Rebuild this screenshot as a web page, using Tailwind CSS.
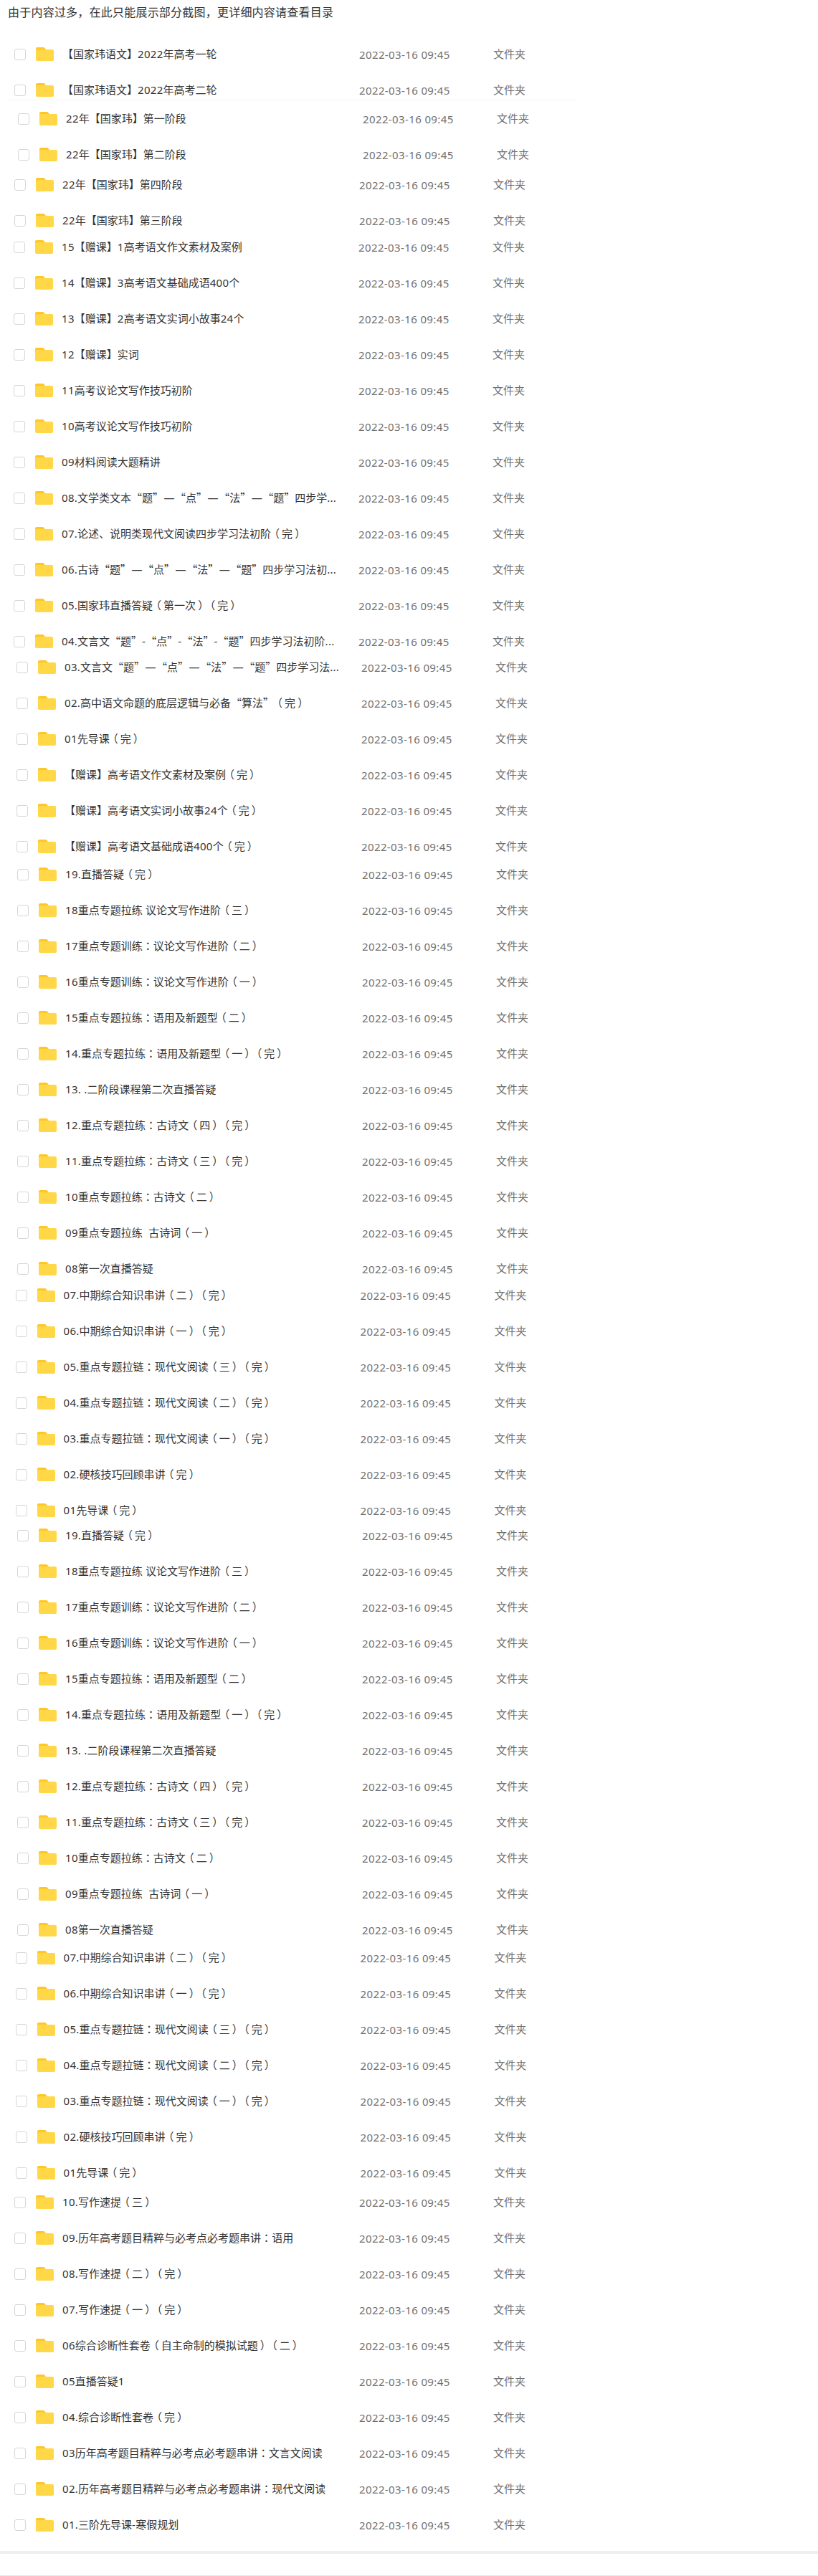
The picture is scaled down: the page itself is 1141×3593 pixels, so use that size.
<!DOCTYPE html>
<html lang="zh-CN">
<head>
<meta charset="utf-8">
<title>目录</title>
<script src="https://cdn.jsdelivr.net/npm/@tailwindcss/browser@4"></script>
</head>
<body class="bg-white">
<main class="flex h-[3593px] w-[1141px] flex-col overflow-hidden font-['Noto_Sans_CJK_SC',sans-serif] [text-spacing-trim:space-all]">
  <p class="h-[66px] shrink-0 pt-1 pl-[11px] text-[16px] leading-6 tracking-[0.22px] text-[#333]">由于内容过多，在此只能展示部分截图，更详细内容请查看目录</p>
  <div id="list" class="flex flex-col"></div>
  <div class="mt-[26px] h-1 shrink-0 bg-[#eee]"></div>
  <div class="mt-[30px] h-px shrink-0 bg-[#ffe6ab]"></div>
</main>
<script>
const late = ['19.直播答疑（完）','18重点专题拉练 议论文写作进阶（三）','17重点专题训练：议论文写作进阶（二）','16重点专题训练：议论文写作进阶（一）','15重点专题拉练：语用及新题型（二）','14.重点专题拉练：语用及新题型（一）（完）','13. .二阶段课程第二次直播答疑','12.重点专题拉练：古诗文（四）（完）','11.重点专题拉练：古诗文（三）（完）','10重点专题拉练：古诗文（二）','09重点专题拉练  古诗词（一）','08第一次直播答疑'];
const early = ['07.中期综合知识串讲（二）（完）','06.中期综合知识串讲（一）（完）','05.重点专题拉链：现代文阅读（三）（完）','04.重点专题拉链：现代文阅读（二）（完）','03.重点专题拉链：现代文阅读（一）（完）','02.硬核技巧回顾串讲（完）','01先导课（完）'];
// Each group: left inset, gap above, row names
const groups = [
  [20, 0, ['【国家玮语文】2022年高考一轮','【国家玮语文】2022年高考二轮']],
  [25, 16, ['22年【国家玮】第一阶段','22年【国家玮】第二阶段']],
  [20, 22, ['22年【国家玮】第四阶段','22年【国家玮】第三阶段']],
  [19, 17, ['15【赠课】1高考语文作文素材及案例','14【赠课】3高考语文基础成语400个','13【赠课】2高考语文实词小故事24个','12【赠课】实词','11高考议论文写作技巧初阶','10高考议论文写作技巧初阶','09材料阅读大题精讲','08.文学类文本“题”—“点”—“法”—“题”四步学...','07.论述、说明类现代文阅读四步学习法初阶（完）','06.古诗“题”—“点”—“法”—“题”四步学习法初...','05.国家玮直播答疑（第一次）（完）','04.文言文“题”-“点”-“法”-“题”四步学习法初阶...']],
  [23, 16, ['03.文言文“题”—“点”—“法”—“题”四步学习法...','02.高中语文命题的底层逻辑与必备“算法”（完）','01先导课（完）','【赠课】高考语文作文素材及案例（完）','【赠课】高考语文实词小故事24个（完）','【赠课】高考语文基础成语400个（完）']],
  [24, 19, late],
  [21.5, 17, early],
  [24, 15, late],
  [21.5, 19, early],
  [20, 21, ['10.写作速提（三）','09.历年高考题目精粹与必考点必考题串讲：语用','08.写作速提（二）（完）','07.写作速提（一）（完）','06综合诊断性套卷（自主命制的模拟试题）（二）','05直播答疑1','04.综合诊断性套卷（完）','03历年高考题目精粹与必考点必考题串讲：文言文阅读','02.历年高考题目精粹与必考点必考题串讲：现代文阅读','01.三阶先导课-寒假规划']],
];
// Latin runs use Noto Sans; full-width brackets and colons are centred in their cell
const format = s => s.replace(/[0-9. \-]+|（|）|：|—/g, m =>
  m === '（' ? '<span class="relative -left-[3px] inline-block w-[15px]">（</span>' :
  m === '）' ? '<span class="relative left-[3px] inline-block w-[15px]">）</span>' :
  m === '：' ? '<span class="font-[\'Noto_Sans_CJK_TC\',sans-serif]" lang="zh-TW">：</span>' :
  m === '—' ? '<span class="inline-block w-4 text-center font-[\'Noto_Sans\',sans-serif]">—</span>' :
  `<span class="font-['Noto_Sans',sans-serif] tracking-[0.3px]">${m}</span>`);
const row = name => `
  <li class="flex h-5 items-center text-[15px] leading-5 whitespace-pre">
    <span class="size-4 shrink-0 rounded-[3px] border-[1.5px] border-[#d6d6d6] bg-white"></span>
    <svg class="ml-[14px] mb-[2px] h-[19px] w-[25px] shrink-0" viewBox="0 0 25 19"><path d="M0 2Q0 0 2 0H10.5Q11.6 0 12.3.9L14 3V8H0Z" fill="#ffc627"/><path d="M0 5Q0 3 2 3H23Q25 3 25 5V17Q25 19 23 19H2Q0 19 0 17Z" fill="#ffd747"/></svg>
    <span class="mb-0.5 ml-3 w-[414px] shrink-0 text-[#333]">${format(name)}</span>
    <span class="w-[187px] shrink-0 font-['Noto_Sans',sans-serif] tracking-[0.38px] text-[#707070]">2022-03-16 09:45</span>
    <span class="mb-0.5 text-[#707070]">文件夹</span>
  </li>`;
document.getElementById('list').innerHTML = groups.map(([x, gap, names], i) =>
  (i === 1 ? '<div class="mt-[3px] ml-[10px] h-px w-[792px] bg-[#f3f3f3]"></div>' : '') +
  `<ul class="flex flex-col gap-[30px]" style="margin-top:${gap}px;padding-left:${x}px">${names.map(row).join('')}</ul>`).join('');
</script>
</body>
</html>
